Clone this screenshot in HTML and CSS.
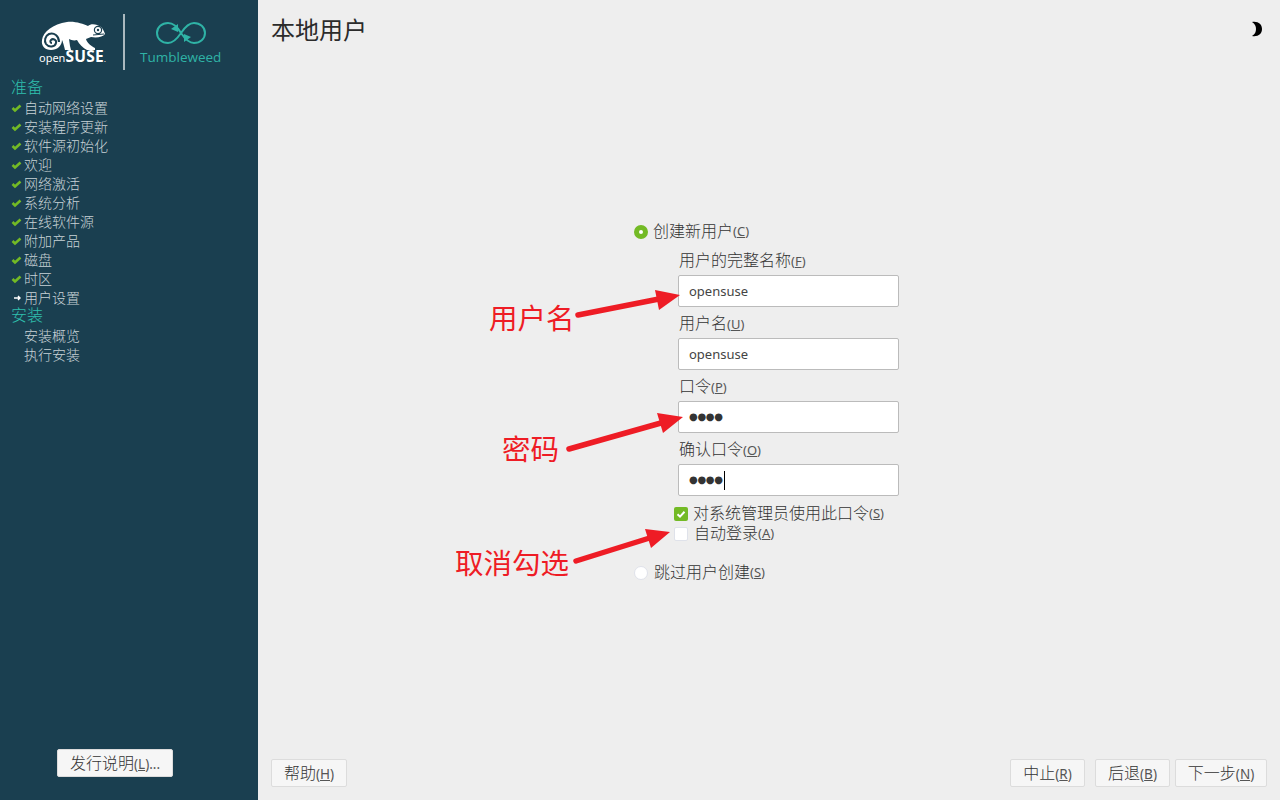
FILE: index.html
```html
<!DOCTYPE html>
<html lang="zh-CN">
<head>
    <meta charset="UTF-8">
    <title>本地用户</title>
    <link rel="stylesheet" href="styles.css">
</head>
<body>
    <div class="left-pane">
        <div class="logo-row">
            <div class="logo-suse">
                <svg class="gecko" width="66" height="30" viewBox="0 0 66 30">
                    <path fill="#fff" d="M1 19C2 11 12 3 26 1C34 0 42 3 47 5C50 2 56 3 60 6C62 8 63 10 64 13C62 16 56 17 50 16L45 18C46 22 50 25 54 27L54 29L46 29C42 27 38 23 36 19C33 20 30 19 28 18L29 25L30 29L24 29C23 25 22 21 21 19C21 25 16 29 10 29C4 29 0 25 1 19Z"/>
                    <path fill="none" stroke="#1a3f50" stroke-width="2" d="M18 21C18 15 13 11 8 13C4 15 3 20 5 23C8 27 14 26 15 22C16 19 12 17 10 19C9 20 9 22 11 22"/>
                    <circle cx="57" cy="9" r="3.6" fill="none" stroke="#1a3f50" stroke-width="1.2"/>
                    <circle cx="57" cy="9" r="1.2" fill="#1a3f50"/>
                    <path fill="none" stroke="#1a3f50" stroke-width="1" d="M52 14L63 13"/>
                </svg>
                <div class="suse-name">open<b>SUSE</b><small>.</small></div>
            </div>
            <div class="logo-line"></div>
            <div class="logo-tw">
                <svg width="50" height="24" viewBox="0 0 50 24">
                    <path fill="none" stroke="#2fb3a6" stroke-width="2" d="M25 12C21 5 17 2 12 2C6 2 1 6 1 12C1 18 6 22 12 22C17 22 21 18 25 12C29 6 33 2 38 2C44 2 49 6 49 12C49 18 44 22 38 22C33 22 29 18 25 12Z"/>
                    <path fill="#2fb3a6" d="M22 3L22 11L15 8Z"/>
                    <path fill="#2fb3a6" d="M28 21L28 13L35 16Z"/>
                </svg>
                <div class="tw-name">Tumbleweed</div>
            </div>
        </div>

        <div class="step-group">准备</div>
        <div class="step"><svg class="check" width="12" height="10" viewBox="0 0 12 10"><path d="M1.5 5L4 7.5L9.5 2.5"/></svg>自动网络设置</div>
        <div class="step"><svg class="check" width="12" height="10" viewBox="0 0 12 10"><path d="M1.5 5L4 7.5L9.5 2.5"/></svg>安装程序更新</div>
        <div class="step"><svg class="check" width="12" height="10" viewBox="0 0 12 10"><path d="M1.5 5L4 7.5L9.5 2.5"/></svg>软件源初始化</div>
        <div class="step"><svg class="check" width="12" height="10" viewBox="0 0 12 10"><path d="M1.5 5L4 7.5L9.5 2.5"/></svg>欢迎</div>
        <div class="step"><svg class="check" width="12" height="10" viewBox="0 0 12 10"><path d="M1.5 5L4 7.5L9.5 2.5"/></svg>网络激活</div>
        <div class="step"><svg class="check" width="12" height="10" viewBox="0 0 12 10"><path d="M1.5 5L4 7.5L9.5 2.5"/></svg>系统分析</div>
        <div class="step"><svg class="check" width="12" height="10" viewBox="0 0 12 10"><path d="M1.5 5L4 7.5L9.5 2.5"/></svg>在线软件源</div>
        <div class="step"><svg class="check" width="12" height="10" viewBox="0 0 12 10"><path d="M1.5 5L4 7.5L9.5 2.5"/></svg>附加产品</div>
        <div class="step"><svg class="check" width="12" height="10" viewBox="0 0 12 10"><path d="M1.5 5L4 7.5L9.5 2.5"/></svg>磁盘</div>
        <div class="step"><svg class="check" width="12" height="10" viewBox="0 0 12 10"><path d="M1.5 5L4 7.5L9.5 2.5"/></svg>时区</div>
        <div class="step"><svg class="current" width="12" height="10" viewBox="0 0 12 10"><path d="M3 5H9M7 3L9 5L7 7"/></svg>用户设置</div>
        <div class="step-group">安装</div>
        <div class="step todo">安装概览</div>
        <div class="step todo">执行安装</div>

        <div class="notes-row">
            <button class="btn notes-btn">发行说明<span class="key">(<u>L</u>)...</span></button>
        </div>
    </div>

    <div class="right-pane">
        <div class="title-row">
            <h1>本地用户</h1>
            <svg class="moon" width="14" height="16" viewBox="0 0 14 16"><path d="M2 1C8 0 12 3 12 8C12 13 8 16 2 15C5 13 6 11 6 8C6 5 5 3 2 1Z"/></svg>
        </div>

        <div class="user-form">
            <div class="radio-row">
                <span class="radio on"></span>创建新用户<span class="key">(<u>C</u>)</span>
            </div>
            <div class="fields">
                <label>用户的完整名称<span class="key">(<u>F</u>)</span></label>
                <div class="field">opensuse</div>
                <label>用户名<span class="key">(<u>U</u>)</span></label>
                <div class="field">opensuse</div>
                <label>口令<span class="key">(<u>P</u>)</span></label>
                <div class="field dots">●●●●</div>
                <label>确认口令<span class="key">(<u>O</u>)</span></label>
                <div class="field dots">●●●●<span class="caret"></span></div>
            </div>
            <div class="check-row">
                <span class="box on"><svg width="14" height="14" viewBox="0 0 14 14"><path d="M3.5 7.2L6 9.6L10.5 4.8"/></svg></span>对系统管理员使用此口令<span class="key">(<u>S</u>)</span>
            </div>
            <div class="check-row second">
                <span class="box"></span>自动登录<span class="key">(<u>A</u>)</span>
            </div>
            <div class="radio-row skip">
                <span class="radio"></span>跳过用户创建<span class="key">(<u>S</u>)</span>
            </div>
        </div>

        <div class="button-row">
            <button class="btn help-btn">帮助<span class="key">(<u>H</u>)</span></button>
            <div class="nav-buttons">
                <button class="btn abort-btn">中止<span class="key">(<u>R</u>)</span></button>
                <button class="btn back-btn">后退<span class="key">(<u>B</u>)</span></button>
                <button class="btn next-btn">下一步<span class="key">(<u>N</u>)</span></button>
            </div>
        </div>
    </div>

    <!-- red notes drawn on top of the screenshot -->
    <svg class="arrows" width="1280" height="800" viewBox="0 0 1280 800">
        <path d="M578 315L664 298"/>
        <polygon points="680,295 655,290 659,310"/>
        <path d="M569 449L668 421"/>
        <polygon points="683,417 657,413 663,433"/>
        <path d="M576 561L656 536"/>
        <polygon points="670,532 645,529 651,548"/>
    </svg>
    <div class="note note-name">用户名</div>
    <div class="note note-pass">密码</div>
    <div class="note note-auto">取消勾选</div>
</body>
</html>
```

FILE: styles.css
```css
body {
    margin: 0;
    display: flex;
    height: 800px;
    overflow: hidden;
    font-family: "Noto Sans", "Noto Sans CJK SC", sans-serif;
    font-size: 16px;
    font-weight: 300;
    color: #333;
    background-color: #eee;
}

.left-pane {
    width: 258px;
    box-sizing: border-box;
    padding-left: 10px;
    display: flex;
    flex-direction: column;
    background-color: #1a3f50;
    color: #c8d2d6;
    font-size: 14px;
}

.logo-row {
    height: 79px;
    box-sizing: border-box;
    padding: 14px 0 0 29px;
    display: flex;
}

.logo-suse {
    width: 72px;
    margin-top: 7px;
}

.gecko {
    display: block;
    margin-left: 2px;
}

.suse-name {
    height: 12px;
    line-height: 12px;
    font-size: 11px;
    font-weight: 400;
    color: #fff;
    margin-top: -1px;
    white-space: nowrap;
}

.suse-name b {
    font-size: 15.5px;
    font-weight: 700;
    letter-spacing: 0.3px;
}

.suse-name small {
    font-size: 7px;
}

.logo-line {
    width: 2px;
    height: 56px;
    margin-left: 12px;
    background-color: #aab8be;
}

.logo-tw {
    margin: 7px 0 0 15px;
    display: flex;
    flex-direction: column;
    align-items: flex-start;
}

.logo-tw svg {
    margin-left: 16px;
}

.tw-name {
    margin-top: 2px;
    font-size: 13.5px;
    line-height: 20px;
    color: #2fb3a6;
    font-family: "Open Sans", sans-serif;
    font-weight: 400;
}

.step-group {
    height: 19px;
    line-height: 17px;
    padding-left: 1px;
    font-size: 16px;
    color: #2fc0ae;
}

.step {
    height: 19px;
    line-height: 19px;
    display: flex;
    align-items: center;
}

.step svg {
    width: 12px;
    margin-left: 1px;
    margin-right: 1px;
    flex: none;
}

.check path {
    fill: none;
    stroke: #73ba25;
    stroke-width: 2.6;
}

.current path {
    fill: none;
    stroke: #fff;
    stroke-width: 1.4;
}

.todo {
    padding-left: 14px;
}

.notes-row {
    margin-top: auto;
    padding: 0 0 23px 47px;
}

.right-pane {
    flex: 1;
    display: flex;
    flex-direction: column;
}

.title-row {
    height: 56px;
    margin-bottom: 4px;
    box-sizing: border-box;
    padding: 0 16px 0 13px;
    display: flex;
    align-items: center;
    justify-content: space-between;
}

.title-row h1 {
    margin: 0;
    font-size: 24px;
    font-weight: 400;
    color: #2b2b2b;
}

.moon {
    margin-top: 2px;
    fill: #000;
}

.user-form {
    margin: 162px 0 0 376px;
    width: 270px;
}

.key {
    font-size: 13px;
    font-weight: 400;
    color: #555;
}

.radio-row {
    height: 20px;
    line-height: 16px;
    box-sizing: border-box;
    padding-bottom: 2px;
    display: flex;
    align-items: center;
    white-space: nowrap;
}

.radio {
    width: 14px;
    height: 14px;
    box-sizing: border-box;
    margin: 2px 5px 0 0;
    border-radius: 50%;
    border: 1px solid #dfe2ea;
    background-color: #fff;
}

.radio.on {
    border: 5px solid #73ba25;
}

.skip {
    margin-top: 19px;
}

.skip .radio {
    margin-right: 6px;
}

.fields {
    margin-left: 44px;
    width: 221px;
    display: flex;
    flex-direction: column;
}

.fields label {
    height: 31px;
    line-height: 33px;
    white-space: nowrap;
    margin-left: 1px;
}

.fields label:first-child {
    margin-top: 2px;
}

.field {
    height: 32px;
    box-sizing: border-box;
    padding-left: 10px;
    line-height: 30px;
    font-size: 13px;
    font-weight: 400;
    color: #444;
    background-color: #fff;
    border: 1px solid #bbb;
    border-radius: 2px;
}

.dots {
    font-size: 10px;
    letter-spacing: -0.3px;
    color: #333;
    font-family: "DejaVu Sans", sans-serif;
}

.caret {
    display: inline-block;
    width: 1px;
    height: 19px;
    margin-left: 1px;
    vertical-align: middle;
    background-color: #000;
}

.check-row {
    height: 20px;
    line-height: 16px;
    box-sizing: border-box;
    padding-bottom: 2px;
    margin: 8px 0 0 40px;
    display: flex;
    align-items: center;
    white-space: nowrap;
}

.check-row.second {
    margin-top: 0;
    padding-bottom: 3px;
}

.box {
    width: 14px;
    height: 14px;
    box-sizing: border-box;
    margin: 2px 5px 0 0;
    border-radius: 2px;
    border: 1px solid #dfe2ea;
    background-color: #fff;
    flex: none;
}

.second .box {
    margin: 3px 6px 0 0;
}

.box.on {
    border: none;
    background-color: #73ba25;
}

.box svg {
    display: block;
    fill: none;
    stroke: #fff;
    stroke-width: 2;
}

.button-row {
    margin-top: auto;
    padding: 0 13px 13px;
    display: flex;
    justify-content: space-between;
}

.nav-buttons {
    display: flex;
}

.btn {
    height: 28px;
    padding: 0 0 6px;
    font-family: inherit;
    font-size: 16px;
    font-weight: 300;
    color: #333;
    background-color: #f6f6f6;
    border: 1px solid #dcdcdc;
    border-radius: 2px;
}

.btn .key {
    font-size: 13.5px;
}

.notes-btn {
    width: 116px;
}

.help-btn {
    width: 76px;
}

.abort-btn {
    width: 75px;
    margin-right: 10px;
}

.back-btn {
    width: 75px;
    margin-right: 5px;
}

.next-btn {
    width: 92px;
}

.arrows {
    position: absolute;
    left: 0;
    top: 0;
}

.arrows path {
    fill: none;
    stroke: #ee1c25;
    stroke-width: 5.5;
    stroke-linecap: round;
}

.arrows polygon {
    fill: #ee1c25;
}

.note {
    position: absolute;
    font-size: 28.5px;
    font-weight: 400;
    line-height: 40px;
    color: #ee1c25;
    white-space: nowrap;
}

.note-name {
    left: 489px;
    top: 298px;
}

.note-pass {
    left: 502px;
    top: 429px;
}

.note-auto {
    left: 455px;
    top: 543px;
}
```
